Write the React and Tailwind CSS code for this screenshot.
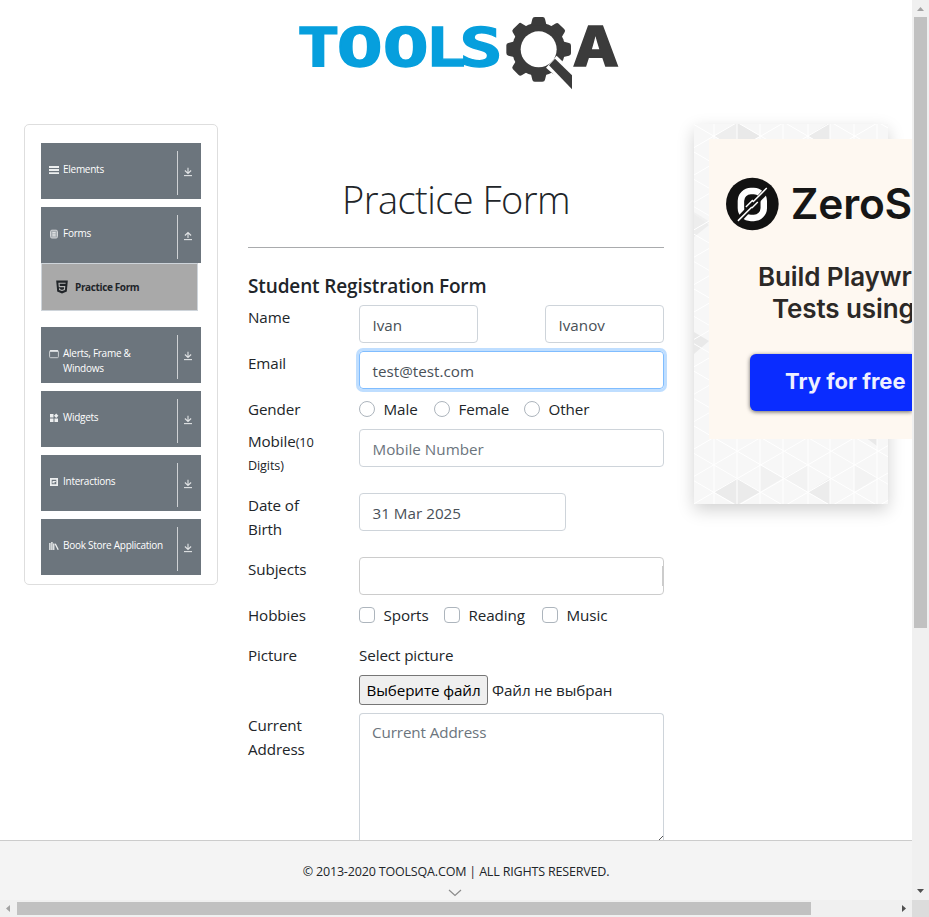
import React from "react";

const ROOT_FONT = "font-['Open_Sans','Noto_Sans',sans-serif]";

function Gear() {
  const teeth = [0, 45, 90, 135, 180, 225, 270, 315];
  return (
    <g>
      <g fill="#3b3b3b">
        <circle cx="746" cy="133" r="80" />
        {teeth.map((a) => (
          <path
            key={a}
            d="M722 62 L727 42 Q728 36 735 36 H758 Q764 36 765 42 L770 62 Z"
            transform={`rotate(${a} 746 133)`}
          />
        ))}
      </g>
      <circle cx="746" cy="133" r="54" fill="#fff" />
      <path d="M768 188 L800 152 L862 212 V270 Z" fill="#fff" />
      <path d="M777 181 L795 161 L846 211 V253 Z" fill="#3b3b3b" />
    </g>
  );
}

function Logo() {
  return (
    <svg width="340" height="95" viewBox="0 0 1020 285" aria-label="TOOLSQA">
      <g fill="#069fdd" stroke="#069fdd" strokeWidth="4" fontFamily="DejaVu Sans Mono" fontWeight="700" fontSize="160">
        <text x="21" y="184" textLength="128" lengthAdjust="spacingAndGlyphs">T</text>
        <text x="140" y="184" textLength="138" lengthAdjust="spacingAndGlyphs">O</text>
        <text x="278" y="184" textLength="138" lengthAdjust="spacingAndGlyphs">O</text>
        <text x="406" y="184" textLength="122" lengthAdjust="spacingAndGlyphs">L</text>
        <text x="508" y="184" textLength="130" lengthAdjust="spacingAndGlyphs">S</text>
      </g>
      <text x="848" y="184" fill="#3b3b3b" stroke="#3b3b3b" strokeWidth="4" fontFamily="Inter" fontWeight="800" fontSize="164" textLength="138" lengthAdjust="spacingAndGlyphs">A</text>
      <Gear />
    </svg>
  );
}

const icons = {
  menu: <path d="M0 1h10v1.9H0zM0 4.1h10V6H0zM0 7.2h10v1.9H0z" />,
  form: (
    <g>
      <rect x="1.5" y="1.2" width="7" height="7.8" rx="1.4" fill="#ffffff66" stroke="#d2d5d8" />
      <path d="M3.4 3.6h3.2M3.4 5.2h3.2M3.4 6.8h3.2" stroke="#fff" strokeWidth=".7" />
    </g>
  ),
  window: (
    <g>
      <rect x=".6" y="1.5" width="8.8" height="7.2" rx="1" fill="none" stroke="#d5d8da" strokeWidth=".9" />
      <path d="M1 1.2h8v1.6H1z" />
    </g>
  ),
  widgets: <path d="M1 1h3.5v3.5H1zM1 5.5h3.5V9H1zM5.5 5.5H9V9H5.5zM7.2.6l2.2 2.2L7.2 5 5 2.8z" />,
  interactions: (
    <path fillRule="evenodd" d="M1 1h8v8H1zM2.7 2.8v4.4h4.6V2.8zM4 4h2.8v.9H4.8v.5H6v.8H3.4V4.6z" />
  ),
  books: (
    <path d="M.2 2h1.4v7H.2zM2.2 1h1.4v8H2.2zM4.1 2.4h1.3V9H4.1zM5.6 3l1.2-.4L9.8 8.6l-1.2.5z" />
  ),
};

function ArrowIcon({ up }) {
  return (
    <svg width="10" height="10" viewBox="0 0 10 10" fill="none" stroke="#e1e3e5" strokeWidth="1.1">
      <path d="M1 8.6h8" />
      {up ? <path d="M5 7V1.5M1.9 4.5 5 1.5l3.1 3" /> : <path d="M5 .8v5.6M1.9 3.5 5 6.5l3.1-3" />}
    </svg>
  );
}

function MenuItem({ icon, label, up }) {
  return (
    <div className="flex h-14 bg-[#6c757d] text-white">
      <div className="flex flex-1 pl-2 pt-[19px]">
        <svg className="mt-[3px] shrink-0" width="10" height="10" viewBox="0 0 10 10" fill="#eceeef">
          {icons[icon]}
        </svg>
        <span className="ml-1 whitespace-pre text-[10px] font-medium leading-[15px] tracking-[-0.27px]">{label}</span>
      </div>
      <div className="mt-2 flex h-11 w-6 border-l border-[#ced1d4] pl-[5px] pt-4">
        <ArrowIcon up={up} />
      </div>
    </div>
  );
}

function Sidebar() {
  return (
    <aside className="ml-6 mt-[124px] flex h-[461px] w-[194px] flex-col gap-2 rounded-[5px] border border-[#dedede] px-4 pt-[18px]">
      <MenuItem icon="menu" label="Elements" />
      <div>
        <MenuItem icon="form" label="Forms" up />
        <div className="mb-2 flex h-12 w-[157px] items-center border border-[#ced4da] bg-[#a9a9a9] pl-[13px] text-[#212529]">
          <svg width="14" height="14" viewBox="0 0 14 14">
            <path fill="#212529" d="M1.2.6h11.6l-1 11L7 13.4 2.2 11.6z" />
            <path fill="none" stroke="#b5b5b5" strokeWidth="1.1" d="M10.6 3.2H4l.3 3.4h5.4l-.3 3L7 10.4l-2.4-.8-.1-1.2" />
          </svg>
          <span className="ml-1.5 text-[10px] font-bold leading-[15px] tracking-[-0.37px]">Practice Form</span>
        </div>
      </div>
      <MenuItem icon="window" label={"Alerts, Frame &\nWindows"} />
      <MenuItem icon="widgets" label="Widgets" />
      <MenuItem icon="interactions" label="Interactions" />
      <MenuItem icon="books" label="Book Store Application" />
    </aside>
  );
}

function Row({ label, height, children }) {
  return (
    <div className={`flex ${height}`}>
      <div className="w-[111px] shrink-0 whitespace-pre leading-6">{label}</div>
      <div className="w-[305px]">{children}</div>
    </div>
  );
}

function Field({ className, children }) {
  return (
    <div className={`h-[38px] rounded border px-[12.5px] pt-[7px] leading-6 tracking-[0.02px] ${className}`}>{children}</div>
  );
}

function Choice({ round, width, children }) {
  return (
    <div className={`flex items-center ${width}`}>
      <span className={`h-4 w-4 shrink-0 border border-[#adb5bd] ${round ? "rounded-full" : "rounded"}`} />
      <span className="ml-[8.5px] leading-6">{children}</span>
    </div>
  );
}

function PracticeForm() {
  return (
    <main className="ml-[30px] mt-[170px] w-[416px] text-[15.2px] tracking-[-0.1px] text-[#212529]">
      <h1 className="h-[77px] pt-[5px] text-center text-[38px] font-light leading-[48px] tracking-[-0.55px]">Practice Form</h1>
      <div className="h-px bg-[#a9abad]" />
      <h5 className="h-[57px] pt-[26px] text-[19px] font-semibold leading-6 tracking-[-0.13px]">Student Registration Form</h5>
      <Row label="Name" height="h-[46px]">
        <div className="flex justify-between text-[#495057]">
          <Field className="w-[119px] border-[#ced4da]">Ivan</Field>
          <Field className="w-[119px] border-[#ced4da]">Ivanov</Field>
        </div>
      </Row>
      <Row label="Email" height="h-[46px]">
        <Field className="border-[#80bdff] text-[#495057] shadow-[0_0_0_3px_#bfdeff]">test@test.com</Field>
      </Row>
      <Row label="Gender" height="h-8">
        <div className="flex">
          <Choice round width="w-[75px]">Male</Choice>
          <Choice round width="w-[90px]">Female</Choice>
          <Choice round width="w-[100px]">Other</Choice>
        </div>
      </Row>
      <Row
        label={
          <>
            <div className="h-6">Mobile<span className="text-[12.8px]">(10</span></div>
            <div className="text-[12.6px] leading-[26px]">Digits)</div>
          </>
        }
        height="h-16"
      >
        <Field className="border-[#ced4da] text-[#6c757d]">Mobile Number</Field>
      </Row>
      <Row label={"Date of\nBirth"} height="h-16">
        <Field className="w-[207px] border-[#ced4da] text-[#495057]">31 Mar 2025</Field>
      </Row>
      <Row label="Subjects" height="h-[46px]">
        <div className="flex h-[38px] items-center justify-end rounded border border-[#ccc]">
          <span className="h-5 w-px bg-[#ccc]" />
        </div>
      </Row>
      <Row label="Hobbies" height="h-10">
        <div className="flex">
          <Choice width="w-[85px]">Sports</Choice>
          <Choice width="w-[98px]">Reading</Choice>
          <Choice width="w-[100px]">Music</Choice>
        </div>
      </Row>
      <Row label="Picture" height="h-[70px]">
        <div className="leading-6">Select picture</div>
        <div className="mt-2 flex items-center">
          <span className="flex h-[30px] w-[129px] items-center justify-center whitespace-nowrap rounded-[3px] border border-[#767676] bg-[#efefef] text-black">
            Выберите файл
          </span>
          <span className="ml-1 whitespace-nowrap">Файл не выбран</span>
        </div>
      </Row>
      <Row label={"Current\nAddress"} height="h-[127px]">
        <div className="flex h-[127px] flex-col justify-between rounded-t border border-b-0 border-[#ced4da]">
          <div className="px-3 pt-1.5 leading-6 text-[#6c757d]">Current Address</div>
          <svg className="self-end" width="5" height="4" viewBox="0 0 5 4">
            <path d="M1 4 5 0" stroke="#555" fill="none" />
          </svg>
        </div>
      </Row>
    </main>
  );
}

const shades = [
  ["20,12 43,-2 43,25", "#eeeeee"],
  ["43,-2 66,12 43,25", "#e9e9e9"],
  ["114,12 136,-2 136,25", "#ebebeb"],
  ["0,88 16,98 0,111", "#f0f0f0"],
  ["0,90 15,101 0,113", "#ededed"],
  ["0,208 15,217 0,230", "#e9e9e9"],
  ["20,368 43,354 43,381", "#ebebeb"],
  ["43,354 66,368 43,381", "#ebebeb"],
  ["114,368 136,354 136,381", "#ececec"],
  ["66,341 89,354 66,368", "#f1f1f1"],
  ["89,354 114,341 114,368", "#f2f2f2"],
  ["160,341 183,354 160,368", "#f3f3f3"],
  ["171,313 183,313 183,322", "#e9e9e9"],
];

function TrianglePattern() {
  return (
    <svg className="absolute inset-0" width="194" height="380" viewBox="0 0 194 380">
      <rect width="194" height="380" fill="#f7f7f7" />
      {shades.map(([points, fill]) => (
        <polygon key={points} points={points} fill={fill} />
      ))}
      <g stroke="#fff" strokeWidth="1" fill="none">
        {[20, 43, 66, 89, 114, 136, 160, 183].map((x) => (
          <path key={x} d={`M${x} 0V380`} />
        ))}
        {Array.from({ length: 19 }, (_, i) => (
          <path key={i} d={`M0 ${i * 27.4 - 109}l194 113M0 ${i * 27.4 - 3.8}l194 -113`} />
        ))}
      </g>
    </svg>
  );
}

function Ad() {
  return (
    <aside className="relative ml-[30px] mt-[124px] h-[380px] w-[194px] shrink-0 p-[15px] shadow-[0_6px_16px_rgba(0,0,0,0.18)]">
      <TrianglePattern />
      <div className="relative h-[300px] w-[203px] bg-[#fef8f1] font-['Inter',sans-serif] text-[#161616]">
        <div className="flex h-[120px] items-center pl-[17px] pt-[10px]">
          <svg width="53" height="54" viewBox="0 0 53 54">
            <circle cx="26.5" cy="27" r="26.5" fill="#121212" />
            <rect x="15" y="14" width="23" height="27" rx="10" fill="none" stroke="#fff" strokeWidth="6.5" />
            <path d="M10 46 44 10" stroke="#121212" strokeWidth="6" />
            <path d="M12 44 26 30M27 25 41 11M20 30 27 23M26 31 32 25" stroke="#fff" strokeWidth="1.5" />
          </svg>
          <span className="ml-3 whitespace-nowrap text-[42.5px] font-semibold leading-none tracking-[-0.2px]">ZeroS</span>
        </div>
        <div className="h-[95px] whitespace-nowrap pt-[2px] text-[26px] font-semibold leading-[32px] tracking-[-0.1px] text-[#2c2927]">
          <div className="pl-[49px]">Build Playwr</div>
          <div className="pl-[63px]">Tests using</div>
        </div>
        <div className="ml-[41px] h-[57px] w-[162px] rounded-l-[6px] bg-[#0a2cff] pl-[35px] pt-[13px] text-[22px] font-bold leading-[28px] text-[#eef0ff] shadow-[0_1px_4px_rgba(0,0,0,0.6)]">
          Try for free
        </div>
      </div>
    </aside>
  );
}

export default function App() {
  return (
    <div className={`grid h-[917px] w-[929px] grid-cols-[912px_17px] grid-rows-[840px_60px_17px] overflow-hidden bg-white ${ROOT_FONT}`}>
      <div className="relative flex overflow-hidden">
        <header className="absolute left-[290px] top-[5px]">
          <Logo />
        </header>
        <Sidebar />
        <PracticeForm />
        <Ad />
      </div>
      <div className="row-span-2 flex flex-col items-center bg-[#f0f0f0]">
        <svg className="h-[17px]" width="17" height="17" viewBox="0 0 17 17"><path d="M5 11h7L8.5 7z" fill="#a3a3a3" /></svg>
        <div className="h-[611px] w-[13px] bg-[#c1c1c1]" />
        <svg className="mt-auto" width="17" height="17" viewBox="0 0 17 17"><path d="M5 6h7L8.5 10z" fill="#505050" /></svg>
      </div>
      <footer className="flex flex-col items-center border-t border-[#ccc] bg-[#f4f4f4] pt-5 text-[#212529]">
        <span className="whitespace-nowrap text-[12.5px] leading-[21px] tracking-[-0.17px]">© 2013-2020 TOOLSQA.COM | ALL RIGHTS RESERVED.</span>
        <svg className="mr-[3px] mt-[7px]" width="14" height="8" viewBox="0 0 14 8"><path d="M1 1l6 5.5L13 1" fill="none" stroke="#8c8c8c" strokeWidth="1.2" /></svg>
      </footer>
      <div className="flex items-center bg-[#f0f0f0]">
        <svg width="17" height="17" viewBox="0 0 17 17"><path d="M10 5v7L6 8.5z" fill="#a3a3a3" /></svg>
        <div className="h-[13px] w-[794px] bg-[#c1c1c1]" />
        <svg className="ml-auto" width="17" height="17" viewBox="0 0 17 17"><path d="M7 5v7l4-3.5z" fill="#505050" /></svg>
      </div>
      <div className="bg-[#dcdcdc]" />
    </div>
  );
}
